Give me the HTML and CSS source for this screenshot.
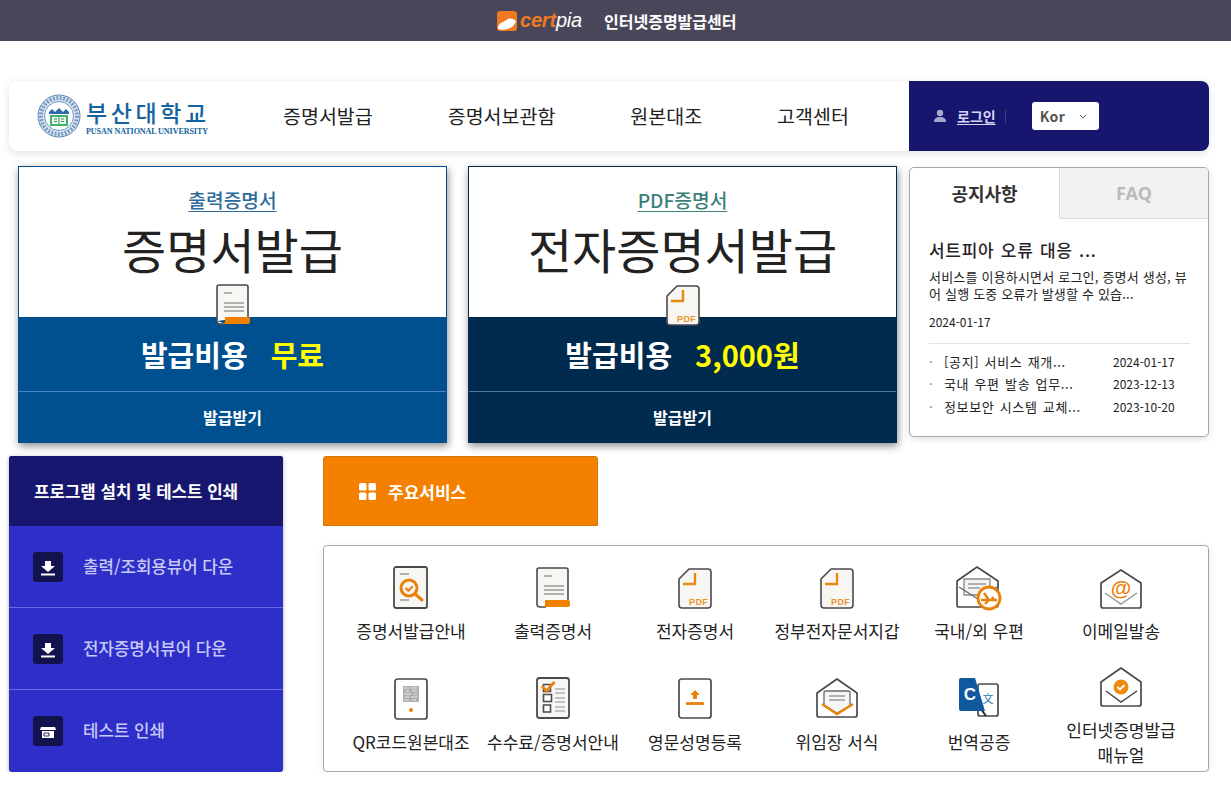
FILE: index.html
```html
<!DOCTYPE html>
<html lang="ko">
<head>
<meta charset="utf-8">
<title>인터넷증명발급센터</title>
<link rel="stylesheet" href="styles.css">
</head>
<body>
<svg class="defs" width="0" height="0" aria-hidden="true">
  <symbol id="i-doc" viewBox="0 0 48 48">
    <path d="M10 4h27a2 2 0 0 1 2 2v33H12a4 4 0 0 0-4 4V6a2 2 0 0 1 2-2z" fill="#f7f6f3"/>
    <path d="M8 40V6a2 2 0 0 1 2-2h27a2 2 0 0 1 2 2v30M8 40a3 3 0 0 0 3 3h6" fill="#f7f6f3" stroke="#4a4a4a" stroke-width="1.6"/>
    <path d="M15 12h8M15 22h20M15 26h20M15 30h20" stroke="#9a9a9a" stroke-width="1.4" fill="none"/>
    <path d="M16 36h23a2 2 0 0 1 2 2v3a2 2 0 0 1-2 2H13a3 3 0 0 0 3-3z" fill="#f08000"/>
  </symbol>
  <symbol id="i-pdf" viewBox="0 0 48 48">
    <path d="M18 5h19a3 3 0 0 1 3 3v33a3 3 0 0 1-3 3H11a3 3 0 0 1-3-3V15z" fill="#f7f6f3" stroke="#4a4a4a" stroke-width="1.6" stroke-linejoin="round"/>
    <path d="M24 9v11H12" fill="none" stroke="#e88a10" stroke-width="2.4"/>
  </symbol>
  <symbol id="i-down" viewBox="0 0 30 30">
    <path d="M12 9h6v5h4l-7 6-7-6h4z" fill="#fff"/>
    <path d="M8 21.500h14v2H8z" fill="#fff"/>
  </symbol>
</svg>

<div class="topbar">
  <div class="certpia">
    <svg class="certpia-mark" width="20" height="20" viewBox="0 0 20 20" aria-hidden="true">
      <rect width="20" height="20" rx="3" fill="#f07a22"/>
      <path d="M1 18c0-4 2-6 5-7l5-3c2-1 6 0 8 2-1 3-3 6-6 7-4 2-8 2-12 1z" fill="#fff"/>
    </svg>
    <span class="certpia-name"><b>cert</b>pia</span>
    <strong class="certpia-title">인터넷증명발급센터</strong>
  </div>
</div>

<div class="page">
  <header class="header">
    <div class="brand">
      <svg class="seal" width="44" height="44" viewBox="0 0 44 44" aria-hidden="true">
        <circle cx="22" cy="22" r="21" fill="#dfe8f2" stroke="#5c86b5" stroke-width="1"/>
        <circle cx="22" cy="22" r="18" fill="none" stroke="#7a9cc4" stroke-width="4" stroke-dasharray="2 1.4"/>
        <circle cx="22" cy="22" r="14.5" fill="#fff" stroke="#4f7db0" stroke-width=".8"/>
        <path d="M12 18l3-3 3 3 4-4 4 4 3-3 3 3v2H12z" fill="#2e6aa8"/>
        <rect x="13" y="21" width="18" height="11" fill="#3fb56b"/>
        <rect x="15" y="23" width="14" height="7" fill="#eaf6ee"/>
        <path d="M22 23v7M17 25h3M24 25h3M17 27.500h3M24 27.500h3" stroke="#2a7d4c" stroke-width=".9"/>
      </svg>
      <div class="brand-text">
        <div class="brand-ko">부산대학교</div>
        <div class="brand-en">PUSAN NATIONAL UNIVERSITY</div>
      </div>
    </div>
    <nav class="nav">
      <a>증명서발급</a>
      <a>증명서보관함</a>
      <a>원본대조</a>
      <a>고객센터</a>
    </nav>
    <div class="account">
      <svg class="user" width="14" height="14" viewBox="0 0 14 14" aria-hidden="true">
        <circle cx="7" cy="4" r="3.200" fill="#a6a6cf"/>
        <path d="M1 13c0-3.500 2-5 6-5s6 1.500 6 5z" fill="#a6a6cf"/>
      </svg>
      <a class="login">로그인</a>
      <span class="sep"></span>
      <div class="lang">
        <span>Kor</span>
        <svg width="8" height="5" viewBox="0 0 8 5" aria-hidden="true"><path d="M.8.8L4 4 7.200.8" fill="none" stroke="#555" stroke-width=".9"/></svg>
      </div>
    </div>
  </header>

  <section class="upper">
    <article class="card card-print">
      <div class="card-top">
        <a class="card-sub">출력증명서</a>
        <h2 class="card-title">증명서발급</h2>
        <svg class="card-icon" width="48" height="48" aria-hidden="true"><use href="#i-doc"/></svg>
      </div>
      <div class="card-price"><span>발급비용</span><em>무료</em></div>
      <a class="card-btn">발급받기</a>
    </article>
    <article class="card card-pdf">
      <div class="card-top">
        <a class="card-sub">PDF증명서</a>
        <h2 class="card-title">전자증명서발급</h2>
        <svg class="card-icon" width="48" height="48" viewBox="0 0 48 48" aria-hidden="true"><use href="#i-pdf" width="48" height="48"/><text x="37" y="41" class="pdf-text" text-anchor="end">PDF</text></svg>
      </div>
      <div class="card-price"><span>발급비용</span><em>3,000원</em></div>
      <a class="card-btn">발급받기</a>
    </article>
    <aside class="notice">
      <div class="tabs">
        <div class="tab tab-on">공지사항</div>
        <div class="tab tab-off">FAQ</div>
      </div>
      <div class="notice-body">
        <h3 class="notice-title">서트피아 오류 대응 ...</h3>
        <p class="notice-text">서비스를 이용하시면서 로그인, 증명서 생성, 뷰<br>어 실행 도중 오류가 발생할 수 있습...</p>
        <div class="notice-date">2024-01-17</div>
        <ul class="notice-list">
          <li><span class="dot">·</span><span class="li-text">[공지] 서비스 재개...</span><span class="li-date">2024-01-17</span></li>
          <li><span class="dot">·</span><span class="li-text">국내 우편 발송 업무...</span><span class="li-date">2023-12-13</span></li>
          <li><span class="dot">·</span><span class="li-text">정보보안 시스템 교체...</span><span class="li-date">2023-10-20</span></li>
        </ul>
      </div>
    </aside>
  </section>

  <section class="lower">
    <aside class="side">
      <h3 class="side-head">프로그램 설치 및 테스트 인쇄</h3>
      <a class="side-item">
        <span class="side-icon"><svg width="30" height="30" aria-hidden="true"><use href="#i-down"/></svg></span>
        <span class="side-label">출력/조회용뷰어 다운</span>
      </a>
      <a class="side-item">
        <span class="side-icon"><svg width="30" height="30" aria-hidden="true"><use href="#i-down"/></svg></span>
        <span class="side-label">전자증명서뷰어 다운</span>
      </a>
      <a class="side-item">
        <span class="side-icon">
          <svg width="30" height="30" viewBox="0 0 30 30" aria-hidden="true">
            <path d="M8 11h14l1 3H7z" fill="#fff"/>
            <path d="M9 15h12v7H9z" fill="#fff"/>
            <path d="M11 17h5v3h-5z" fill="none" stroke="#14124e" stroke-width=".9"/>
          </svg>
        </span>
        <span class="side-label">테스트 인쇄</span>
      </a>
    </aside>

    <div class="services">
      <div class="service-tab">
        <svg width="17" height="17" viewBox="0 0 17 17" aria-hidden="true">
          <rect width="7.500" height="7.500" rx="1.500" fill="#fff"/>
          <rect x="9.500" width="7.500" height="7.500" rx="1.500" fill="#fff"/>
          <rect y="9.500" width="7.500" height="7.500" rx="1.500" fill="#fff"/>
          <rect x="9.500" y="9.500" width="7.500" height="7.500" rx="1.500" fill="#fff"/>
        </svg>
        주요서비스
      </div>
      <div class="grid">
        <a class="svc">
          <svg width="48" height="48" viewBox="0 0 48 48" aria-hidden="true">
            <rect x="7" y="3" width="33" height="41" rx="2" fill="#f7f6f3" stroke="#4a4a4a" stroke-width="1.800"/>
            <path d="M13 10h9M13 36h9" stroke="#9a9a9a" stroke-width="1.400"/>
            <circle cx="22" cy="24" r="8" fill="#f7f6f3" stroke="#e8820c" stroke-width="3"/>
            <path d="M18.500 24l2.800 2.800 4.500-4.500" fill="none" stroke="#e8820c" stroke-width="2.200"/>
            <path d="M28 30l7 6" stroke="#e8820c" stroke-width="3" stroke-linecap="round"/>
          </svg>
          <span>증명서발급안내</span>
        </a>
        <a class="svc"><svg width="48" height="48" aria-hidden="true"><use href="#i-doc"/></svg><span>출력증명서</span></a>
        <a class="svc"><svg width="48" height="48" viewBox="0 0 48 48" aria-hidden="true"><use href="#i-pdf" width="48" height="48"/><text x="37" y="41" class="pdf-text" text-anchor="end">PDF</text></svg><span>전자증명서</span></a>
        <a class="svc"><svg width="48" height="48" viewBox="0 0 48 48" aria-hidden="true"><use href="#i-pdf" width="48" height="48"/><text x="37" y="41" class="pdf-text" text-anchor="end">PDF</text></svg><span>정부전자문서지갑</span></a>
        <a class="svc">
          <svg width="48" height="48" viewBox="0 0 48 48" aria-hidden="true">
            <path d="M2 17L22 3l21 14v24a2 2 0 0 1-2 2H4a2 2 0 0 1-2-2z" fill="#fff" stroke="#4a4a4a" stroke-width="1.700" stroke-linejoin="round"/>
            <path d="M9 15h26v16H9z" fill="#f4f4f2" stroke="#8a8a8a" stroke-width="1.300"/>
            <path d="M13 20h18M13 24h12" stroke="#9a9a9a" stroke-width="1.300"/>
            <path d="M4 23l19 12 19-12" fill="none" stroke="#6a6a6a" stroke-width="1.300"/>
            <circle cx="34" cy="34" r="11" fill="#fff" stroke="#e8820c" stroke-width="2.800"/>
            <path d="M26 36h16M29 29l5 7M34 36l-4 4M37 33l2 3" stroke="#e8820c" stroke-width="2.400" fill="none"/>
          </svg>
          <span>국내/외 우편</span>
        </a>
        <a class="svc">
          <svg width="48" height="48" viewBox="0 0 48 48" aria-hidden="true">
            <path d="M4 19L24 6l20 13v23a2 2 0 0 1-2 2H6a2 2 0 0 1-2-2z" fill="#fff" stroke="#4a4a4a" stroke-width="1.700" stroke-linejoin="round"/>
            <path d="M8 29l16 11 16-11" fill="none" stroke="#9a9a9a" stroke-width="1.500"/>
            <text x="24" y="31" class="at-text" text-anchor="middle">@</text>
          </svg>
          <span>이메일발송</span>
        </a>
        <a class="svc">
          <svg width="48" height="48" viewBox="0 0 48 48" aria-hidden="true">
            <rect x="8" y="4" width="32" height="40" rx="2.500" fill="#fff" stroke="#4a4a4a" stroke-width="1.700"/>
            <rect x="16" y="11" width="16" height="16" fill="#b0b0b0"/>
            <path d="M17 13h5M24 13h6M19 16h3M25 16h5M17 19h7M27 19h3M18 22h4M24 22h6M17 25h5M25 25h4" stroke="#e6e6e6" stroke-width="1"/>
            <circle cx="24" cy="35" r="2" fill="#e8820c"/>
          </svg>
          <span>QR코드원본대조</span>
        </a>
        <a class="svc">
          <svg width="48" height="48" viewBox="0 0 48 48" aria-hidden="true">
            <rect x="8" y="3" width="32" height="40" rx="2.500" fill="#f7f6f3" stroke="#4a4a4a" stroke-width="1.800"/>
            <path d="M14.500 9.500h7v7h-7zM14.500 19.500h8v7h-8zM14.500 30h7v7h-7z" fill="#fff" stroke="#4a4a4a" stroke-width="1.600"/>
            <path d="M13 11l4.500 5 8-9" fill="none" stroke="#e8820c" stroke-width="2.800"/>
            <path d="M26 14h10M26 18h10M26 23h10M26 27h10M26 32h10M26 36h10" stroke="#8a8a8a" stroke-width="1.200"/>
          </svg>
          <span>수수료/증명서안내</span>
        </a>
        <a class="svc">
          <svg width="48" height="48" viewBox="0 0 48 48" aria-hidden="true">
            <rect x="8" y="4" width="32" height="39" rx="2.500" fill="#fff" stroke="#4a4a4a" stroke-width="1.700"/>
            <path d="M24 15l5 5h-3v4h-4v-4h-3z" fill="#e8820c"/>
            <path d="M15 28.500h18" stroke="#e8820c" stroke-width="2.800"/>
          </svg>
          <span>영문성명등록</span>
        </a>
        <a class="svc">
          <svg width="48" height="48" viewBox="0 0 48 48" aria-hidden="true">
            <path d="M4 18L24 4l20 14v22a2 2 0 0 1-2 2H6a2 2 0 0 1-2-2z" fill="#fff" stroke="#4a4a4a" stroke-width="1.700" stroke-linejoin="round"/>
            <path d="M11 18a2 2 0 0 1 2-2h22a2 2 0 0 1 2 2v13l-13 7-13-7z" fill="#f5f5f3" stroke="#6a6a6a" stroke-width="1.300"/>
            <path d="M16 21h16M16 25h16" stroke="#9a9a9a" stroke-width="1.400"/>
            <path d="M9 29l15 10 16-10" fill="none" stroke="#e8820c" stroke-width="2.600"/>
          </svg>
          <span>위임장 서식</span>
        </a>
        <a class="svc">
          <svg width="48" height="48" viewBox="0 0 48 48" aria-hidden="true">
            <rect x="23" y="9" width="20" height="32" rx="2" fill="#fff" stroke="#4a4a4a" stroke-width="1.700"/>
            <path d="M26 34l5 7" stroke="#2a2a2a" stroke-width="2"/>
            <path d="M6 3h14l10 33H6a2 2 0 0 1-2-2V5a2 2 0 0 1 2-2z" fill="#10599f"/>
            <text x="15" y="25" class="c-text" text-anchor="middle">C</text>
            <text x="33" y="28" class="wen-text" text-anchor="middle">文</text>
          </svg>
          <span>번역공증</span>
        </a>
        <a class="svc">
          <svg width="48" height="48" viewBox="0 0 48 48" aria-hidden="true">
            <path d="M4 19L24 5l20 14v22a2 2 0 0 1-2 2H6a2 2 0 0 1-2-2z" fill="#fff" stroke="#4a4a4a" stroke-width="1.700" stroke-linejoin="round"/>
            <path d="M9 28l15 11 16-11" fill="none" stroke="#4a4a4a" stroke-width="1.500"/>
            <circle cx="24" cy="24" r="7.500" fill="#ee8a0e"/>
            <path d="M20.500 24l2.500 2.500 4.500-4.500" fill="none" stroke="#fff" stroke-width="1.800"/>
          </svg>
          <span>인터넷증명발급<br>매뉴얼</span>
        </a>
      </div>
    </div>
  </section>
</div>
</body>
</html>
```

FILE: styles.css
```css
* { box-sizing: border-box; }

html, body {
  margin: 0;
  padding: 0;
  background: #fff;
}

body {
  font-family: "Noto Sans CJK KR", "Noto Sans", sans-serif;
  color: #222;
  overflow: hidden;
}

a { color: inherit; text-decoration: none; }
h2, h3, p, ul { margin: 0; padding: 0; }
ul { list-style: none; }
em { font-style: normal; }

.defs { position: absolute; }

.pdf-text {
  font: 700 9px "Liberation Sans", sans-serif;
  fill: #e8952e;
  letter-spacing: .3px;
}
.at-text { font: 700 21px "Liberation Sans", sans-serif; fill: #e8820c; }
.c-text { font: 700 17px "Liberation Sans", sans-serif; fill: #fff; }
.wen-text { font: 400 11px "Noto Sans CJK KR", sans-serif; fill: #2f7fc0; }

/* top bar */
.topbar {
  height: 41px;
  background: #4a4659;
  display: flex;
  align-items: center;
  padding-left: 497px;
}
.certpia { display: flex; align-items: center; }
.certpia-mark { margin-right: 3px; }
.certpia-name {
  font: italic 400 20px "Liberation Sans", sans-serif;
  color: #fff;
  width: 84px;
  letter-spacing: -.2px;
}
.certpia-name b { color: #f07a22; font-weight: 700; }
.certpia-title {
  color: #fff;
  font-size: 16px;
  font-weight: 700;
  line-height: 24px;
}

/* page */
.page {
  width: 1209px;
  padding: 40px 0 0 9px;
}

.header {
  height: 70px;
  display: flex;
  align-items: center;
  background: #fff;
  border-radius: 8px;
  box-shadow: 0 2px 8px rgba(0, 0, 0, .12);
}
.brand {
  width: 274px;
  padding-left: 28px;
  display: flex;
  align-items: center;
  gap: 5px;
}
.brand-text { width: 124px; padding-top: 4px; }
.brand-ko {
  font-size: 23px;
  line-height: 25px;
  color: #14639f;
  font-weight: 500;
  letter-spacing: 3.600px;
}
.brand-en {
  font: 700 8.100px/11px "Liberation Serif", serif;
  color: #14639f;
  white-space: nowrap;
  letter-spacing: -.1px;
  margin-top: 1px;
}
.nav {
  flex: 1;
  display: flex;
  gap: 75px;
  font-size: 19.500px;
  line-height: 28px;
  color: #222;
}
.account {
  width: 300px;
  height: 70px;
  background: #16166f;
  border-radius: 0 8px 8px 0;
  display: flex;
  align-items: center;
  padding-left: 24px;
}
.login {
  margin-left: 10px;
  color: #d5d5f5;
  font-size: 14px;
  font-weight: 700;
  text-decoration: underline;
  text-underline-offset: 2px;
  text-decoration-thickness: 1px;
}
.sep {
  width: 1px;
  height: 13px;
  background: #3d3d8a;
  margin: 0 26px 0 9px;
}
.lang {
  width: 67px;
  height: 28px;
  background: #fff;
  border-radius: 3px;
  display: flex;
  align-items: center;
  gap: 14px;
  padding-left: 8px;
  color: #555;
  font-size: 14px;
  font-weight: 700;
  letter-spacing: .5px;
}

/* cards */
.upper {
  display: flex;
  align-items: flex-start;
  margin-top: 15px;
  padding-left: 9px;
}
.card {
  width: 429px;
  height: 277px;
  margin-right: 21px;
  display: flex;
  flex-direction: column;
  box-shadow: 1px 3px 8px rgba(0, 0, 0, .45);
  border: 1px solid;
  text-align: center;
}
.card-pdf { margin-right: 12px; }
.card-print { border-color: #00508f; background: #00508f; color: #fff; }
.card-pdf { border-color: #012a4f; background: #012a4f; color: #fff; }
.card-top {
  position: relative;
  height: 150px;
  background: #fff;
  padding-top: 18px;
}
.card-sub {
  display: block;
  font-size: 19.200px;
  font-weight: 500;
  line-height: 30px;
  text-decoration: underline;
  text-underline-offset: 3px;
  text-decoration-thickness: 1px;
}
.card-print .card-sub { color: #2c6b9c; }
.card-pdf .card-sub { color: #3c8078; }
.card-title {
  font-size: 48px;
  font-weight: 400;
  line-height: 60px;
  color: #222;
  margin-top: 3px;
}
.card-icon {
  position: absolute;
  left: 50%;
  bottom: -12px;
  margin-left: -24px;
}
.card-price {
  height: 75px;
  border-bottom: 1px solid rgba(120, 170, 225, .6);
  display: flex;
  align-items: center;
  justify-content: center;
  gap: 23px;
  font-size: 29px;
  font-weight: 700;
  line-height: 40px;
}
.card-price em { color: #ff0; }
.card-btn {
  flex: 1;
  display: flex;
  align-items: center;
  justify-content: center;
  font-size: 16px;
  font-weight: 700;
}

/* notice */
.notice {
  width: 300px;
  height: 270px;
  margin-top: 1px;
  border: 1px solid #a8a8a8;
  border-radius: 5px;
  box-shadow: 0 2px 6px rgba(0, 0, 0, .12);
  background: #fff;
  overflow: hidden;
}
.tabs { display: flex; height: 51px; }
.tab {
  display: flex;
  align-items: center;
  justify-content: center;
  font-size: 18px;
  font-weight: 700;
}
.tab-on { width: 149px; color: #333; padding-bottom: 2px; }
.tab-off {
  flex: 1;
  background: #f2f2f2;
  color: #bbb;
  border-left: 1px solid #ddd;
  border-bottom: 1px solid #ddd;
  font-family: "Noto Sans", sans-serif;
}
.notice-body { padding: 18px 19px 0 19px; }
.notice-title {
  font-size: 17px;
  font-weight: 500;
  line-height: 26px;
  color: #2a1f2a;
  letter-spacing: .7px;
  word-spacing: 1px;
}
.notice-text {
  font-size: 13px;
  line-height: 17px;
  color: #222;
  margin-top: 5px;
  letter-spacing: .2px;
  white-space: nowrap;
}
.notice-date {
  font-size: 12px;
  line-height: 16px;
  margin-top: 12px;
  color: #222;
}
.notice-list {
  border-top: 1px solid #e3e3e3;
  margin-top: 13px;
  padding-top: 6px;
  width: 261px;
}
.notice-list li {
  display: flex;
  align-items: center;
  height: 22.500px;
  font-size: 13px;
  color: #222;
}
.dot { width: 15px; color: #777; }
.li-text {
  width: 169px;
  letter-spacing: .65px;
  word-spacing: 1px;
  white-space: nowrap;
}
.li-date { font-size: 12px; }

/* lower */
.lower {
  display: flex;
  align-items: flex-start;
  margin-top: 13px;
  gap: 40px;
}
.side {
  width: 274px;
  height: 316px;
  background: #2e2ec8;
  border-radius: 3px;
  box-shadow: 0 1px 4px rgba(0, 0, 0, .3);
  overflow: hidden;
  display: flex;
  flex-direction: column;
}
.side-head {
  height: 70px;
  background: #17176f;
  color: #fff;
  font-size: 16.800px;
  font-weight: 700;
  line-height: 70px;
  padding-left: 25px;
}
.side-item {
  height: 82px;
  display: flex;
  align-items: center;
  padding-left: 24px;
  gap: 20px;
  color: #c8c8f6;
  font-size: 16.800px;
  font-weight: 500;
  box-shadow: inset 0 -1px 0 #6a6ae0;
}
.side-item:last-child { box-shadow: none; }
.side-label { padding-bottom: 3px; }
.side-icon {
  width: 30px;
  height: 30px;
  border-radius: 3px;
  background: #14124e;
  display: block;
}
.side-icon svg { display: block; }

.services { width: 886px; }
.service-tab {
  width: 275px;
  height: 70px;
  background: #f48000;
  color: #fff;
  border: 1px solid #d47406;
  border-radius: 3px 3px 0 0;
  display: flex;
  align-items: center;
  gap: 12px;
  padding-left: 35px;
  font-size: 17px;
  font-weight: 700;
}
.grid {
  margin-top: 19px;
  height: 227px;
  border: 1px solid #a8a8a8;
  border-radius: 4px;
  box-shadow: 0 2px 6px rgba(0, 0, 0, .1);
  padding: 2px 16px 0;
  display: grid;
  grid-template-columns: repeat(6, 142px);
  grid-template-rows: repeat(2, 111px);
  align-items: center;
}
.svc {
  display: flex;
  flex-direction: column;
  align-items: center;
  gap: 6px;
  text-align: center;
  font-size: 17px;
  line-height: 25px;
  color: #222;
  white-space: nowrap;
}
.svc svg { display: block; }
```
